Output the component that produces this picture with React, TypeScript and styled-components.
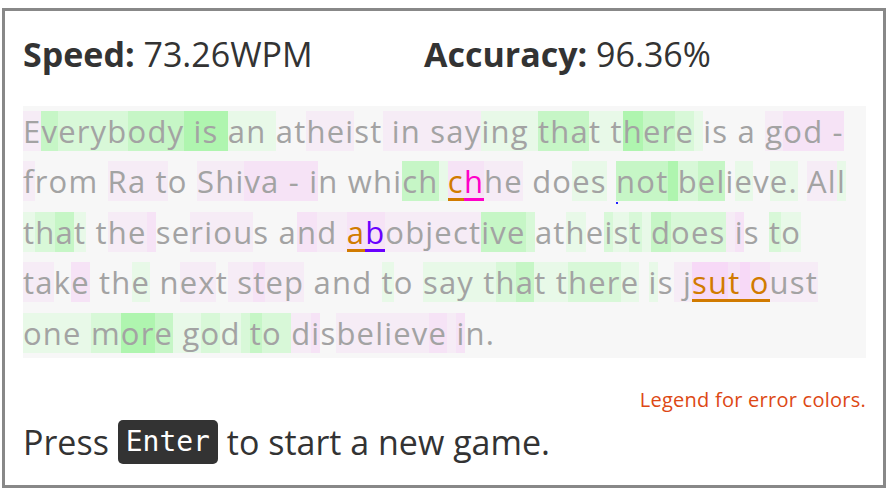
import React from 'react';
import styled, { createGlobalStyle } from 'styled-components';

const Global = createGlobalStyle`
  html, body { margin: 0; padding: 0; background: #ffffff; overflow: hidden; }
  body { font-family: "Open Sans", "Noto Sans", sans-serif; }
`;

const Frame = styled.div`
  box-sizing: border-box;
  margin: 8px 2px 0;
  width: 884px;
  height: 480px;
  border: 3px solid #888888;
  padding: 0 17px 0 18px;
  display: flex;
  flex-direction: column;
  color: #333333;
`;

const Stats = styled.div`
  display: flex;
  padding: 21px 0 30px;
  font-size: 34px;
  line-height: 44px;
`;

const Stat = styled.div<{ $w?: number }>`
  flex: none;
  width: ${(p) => (p.$w ? `${p.$w}px` : 'auto')};
  white-space: nowrap;
`;

const Label = styled.span`
  font-weight: 700;
`;

const Passage = styled.div`
  background: #f7f7f7;
  font-size: 31px;
  letter-spacing: 1.2px;
  color: #a3a3a3;
`;

const Line = styled.div`
  height: 50.4px;
  line-height: 50.4px;
  white-space: pre;
`;

const BG: Record<string, string> = {
  '.': 'transparent',
  a: '#e8f9e8',
  b: '#d8f8d8',
  c: '#c6f6c6',
  d: '#aff5af',
  p: '#f6ecf6',
  q: '#f6e3f6',
  r: '#f7d9f7',
};

const ERR: Record<string, string> = {
  o: '#d17b00',
  m: '#ff00c8',
  v: '#6a00ff',
};

const Char = styled.span<{ $bg: string; $err?: string; $dot?: boolean }>`
  display: inline-block;
  position: relative;
  height: 40px;
  line-height: 40px;
  vertical-align: baseline;
  white-space: pre;
  background: ${(p) => p.$bg};
  color: ${(p) => (p.$err ? p.$err : 'inherit')};
  box-shadow: ${(p) => (p.$err ? `inset 0 -3px 0 ${p.$err}` : 'none')};
  &::after {
    content: '';
    display: ${(p) => (p.$dot ? 'block' : 'none')};
    position: absolute;
    left: 0;
    bottom: -3px;
    width: 2px;
    height: 2px;
    background: #2020ff;
  }
`;

const Legend = styled.div`
  margin-top: 30px;
  text-align: right;
  font-size: 20px;
  letter-spacing: 0.25px;
  line-height: 24px;
  color: #dd4814;
`;

const Prompt = styled.div`
  margin-top: 8px;
  font-size: 34px;
  line-height: 44px;
  white-space: nowrap;
`;

const Kbd = styled.kbd`
  display: inline-block;
  vertical-align: top;
  height: 44px;
  line-height: 44px;
  padding: 0 8px;
  border-radius: 5px;
  background: #333333;
  color: #ffffff;
  font-family: "DejaVu Sans Mono", monospace;
  font-size: 28px;
`;

type Seg = [string, string, string?, boolean?];

const LINES: Seg[][] = [
  [
    ['E', 'p'], ['v', 'c'], ['eryb', 'b'], ['ody', 'c'], [' is ', 'd'], ['an ', 'a'],
    ['at', '.'], ['hei', 'p'], ['st', '.'], [' in ', 'p'], ['say', 'p'], ['ing ', 'a'],
    ['tha', 'c'], ['t t', 'a'], ['h', 'd'], ['er', 'c'], ['e', 'b'], [' ', 'a'],
    ['is a ', '.'], ['g', 'p'], ['od -', 'q'],
  ],
  [
    ['f', 'p'], ['rom ', '.'], ['Ra t', 'p'], ['o ', '.'], ['Shi', 'p'], ['va - i', 'q'],
    ['n whi', '.'], ['ch', 'c'], [' ', 'a'], ['c', 'q', 'o'], ['h', 'q', 'm'], ['he', 'p'],
    [' do', '.'], ['e', 'a'], ['s', 'a'], [' ', '.'], ['n', 'c', undefined, true], ['ot', 'c'],
    [' ', 'd'], ['b', 'b'], ['el', 'c'], ['i', '.'], ['e', 'a'], ['v', '.'], ['e.', 'a'],
    [' ', '.'], ['Al', 'p'], ['l', 'a'],
  ],
  [
    ['t', 'a'], ['h', 'b'], ['a', 'c'], ['t', 'a'], [' ', '.'], ['t', '.'], ['he', 'p'],
    [' ', 'q'], ['se', '.'], ['riou', 'p'], ['s ', '.'], ['a', '.'], ['n', 'q'], ['d ', 'p'],
    ['a', 'q', 'o'], ['b', 'q', 'v'], ['object', 'p'], ['ive', 'c'], [' ', 'b'], ['at', '.'],
    ['h', 'a'], ['e', '.'], ['i', 'b'], ['s', 'a'], ['t', 'b'], [' ', 'a'], ['d', 'c'],
    ['oes', 'b'], [' ', 'p'], ['i', 'q'], ['s ', '.'], ['t', 'b'], ['o', 'a'],
  ],
  [
    ['ta', 'p'], ['k', '.'], ['e', 'q'], [' th', '.'], ['e', 'a'], [' n', '.'], ['ex', 'p'],
    ['t', '.'], [' s', 'p'], ['t', 'q'], ['ep', 'p'], [' and ', '.'], ['t', 'a'], ['o ', '.'],
    ['say t', 'a'], ['h', 'b'], ['a', 'c'], ['t t', 'a'], ['her', 'b'], ['e', 'a'], [' ', '.'],
    ['i', 'a'], ['s', '.'], [' j', 'p'], ['su', 'r', 'o'], ['t', 'q', 'o'], [' ', 'r', 'o'],
    ['o', 'q', 'o'], ['ust', 'p'],
  ],
  [
    ['one ', 'a'], ['m', 'b'], ['or', 'd'], ['e', 'c'], [' g', 'a'], ['o', 'b'], ['d', 'a'],
    [' ', 'b'], ['t', 'c'], ['o ', 'b'], ['d', 'p'], ['i', 'q'], ['s', '.'], ['belie', 'p'],
    ['v', 'p'], ['e', 'q'], [' ', 'p'], ['i', 'q'], ['n.', '.'],
  ],
];

function renderLine(segs: Seg[], li: number) {
  const out: React.ReactNode[] = [];
  segs.forEach(([text, code, err, dot], si) => {
    Array.from(text).forEach((ch, ci) => {
      out.push(
        <Char
          key={`${li}-${si}-${ci}`}
          $bg={BG[code]}
          $err={err ? ERR[err] : undefined}
          $dot={dot && ci === 0}
        >
          {ch}
        </Char>
      );
    });
  });
  return <Line key={li}>{out}</Line>;
}

export default function App() {
  return (
    <>
      <Global />
      <Frame>
        <Stats>
          <Stat $w={401}>
            <Label>Speed:</Label> 73.26WPM
          </Stat>
          <Stat>
            <Label>Accuracy:</Label> 96.36%
          </Stat>
        </Stats>
        <Passage>{LINES.map((l, i) => renderLine(l, i))}</Passage>
        <Legend>Legend for error colors.</Legend>
        <Prompt>
          Press <Kbd>Enter</Kbd> to start a new game.
        </Prompt>
      </Frame>
    </>
  );
}
